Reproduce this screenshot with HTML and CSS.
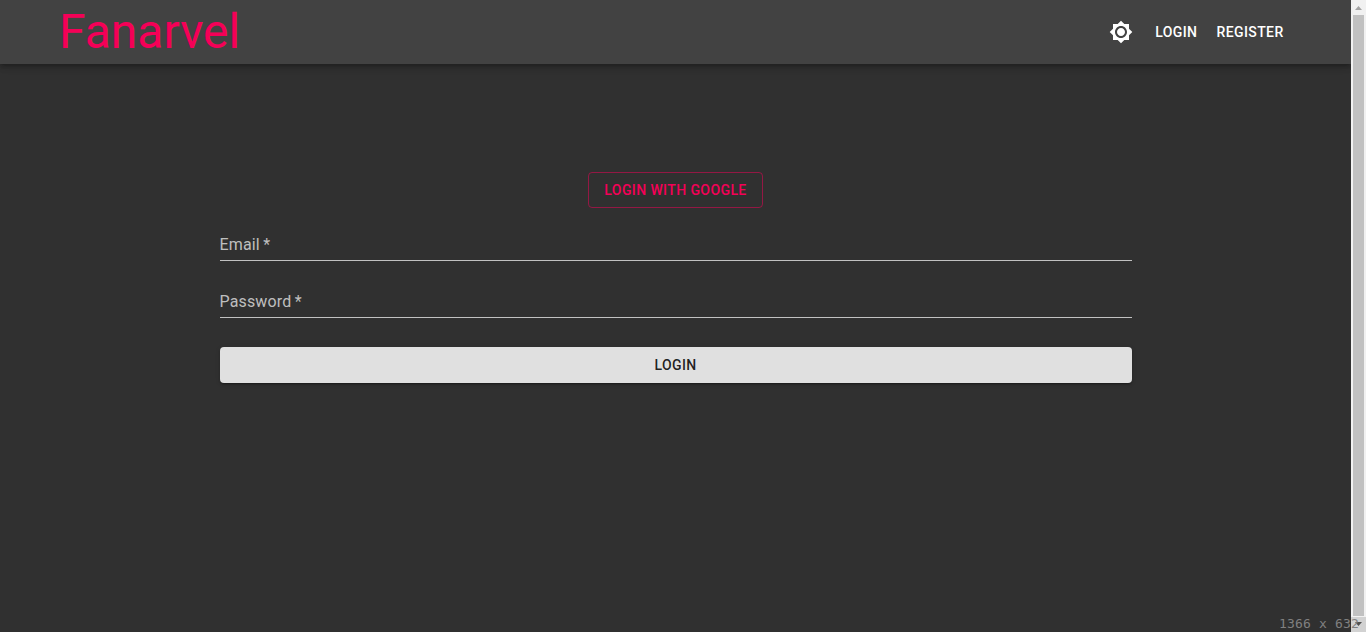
FILE: index.html
```html
<!DOCTYPE html>
<html lang="en">
<head>
<meta charset="utf-8">
<title>Fanarvel</title>
<link rel="stylesheet" href="styles.css">
</head>
<body>
<div class="page">
  <header class="appbar">
    <div class="brand">Fanarvel</div>
    <nav class="nav">
      <button class="icon-btn" aria-label="Toggle theme">
        <svg class="icon" viewBox="0 0 24 24"><path d="M20 8.69V4h-4.690L12 .69 8.690 4H4v4.690L.69 12 4 15.310V20h4.690L12 23.310 15.310 20H20v-4.690L23.310 12 20 8.690zM12 18c-3.310 0-6-2.690-6-6s2.690-6 6-6 6 2.690 6 6-2.690 6-6 6zm0-10c-2.210 0-4 1.790-4 4s1.790 4 4 4 4-1.790 4-4-1.790-4-4-4z"/></svg>
      </button>
      <a class="btn nav-link">Login</a>
      <a class="btn nav-link">Register</a>
    </nav>
  </header>
  <main class="main">
    <button class="btn google">Login with Google</button>
    <form class="form">
      <label class="field">Email<span class="required">*</span></label>
      <label class="field">Password<span class="required">*</span></label>
      <button type="button" class="btn submit">Login</button>
    </form>
  </main>
</div>
<div class="scrollbar">
  <div class="arrow"><svg class="up" viewBox="0 0 15 15"><path d="M4 10h7L7.500 6z"/></svg></div>
  <div class="thumb"></div>
  <div class="arrow down"><svg viewBox="0 0 15 15"><path d="M4 5h7L7.500 9z"/></svg></div>
</div>
<div class="size">1366 x 632</div>
</body>
</html>
```
FILE: styles.css
```css
* { box-sizing: border-box; }
body { margin: 0; height: 632px; display: flex; overflow: hidden; position: relative; background: #303030; color: #fff; font-family: Roboto, sans-serif; }
.page { flex: 1; }
.appbar { height: 64px; padding: 0 59.4px 0 59px; display: flex; align-items: center; justify-content: space-between; background: #424242; box-shadow: 0 2px 4px -1px rgba(0,0,0,.2), 0 4px 5px rgba(0,0,0,.14), 0 1px 10px rgba(0,0,0,.12); }
.brand { color: #f50057; font-size: 48px; line-height: 56px; }
.nav { display: flex; align-items: center; }
.icon-btn { width: 48px; height: 48px; padding: 12px; margin-right: -.5px; border: 0; background: none; }
.icon { display: block; width: 24px; height: 24px; fill: #fff; }
.btn { font: 500 14px/24.5px Roboto, sans-serif; letter-spacing: .4px; text-transform: uppercase; border: 0; border-radius: 4px; }
.nav-link { padding: 6px 8px; margin-left: 3px; }
.main { width: 912px; margin: 108px auto 0; display: flex; flex-direction: column; align-items: center; }
.google { height: 36px; padding: 5px 15px; background: none; color: #f50057; border: 1px solid rgba(245,0,87,.5); }
.form { width: 100%; display: flex; flex-direction: column; margin-top: 21px; }
.field { height: 32px; margin-bottom: 25px; padding-top: 6px; border-bottom: 1px solid rgba(255,255,255,.7); color: rgba(255,255,255,.7); font-size: 16px; line-height: 19px; letter-spacing: .15px; }
.required { margin-left: 3.3px; }
.submit { height: 36px; padding: 6px 16px; margin-top: 4px; background: #e0e0e0; color: rgba(0,0,0,.87); box-shadow: 0 3px 1px -2px rgba(0,0,0,.2), 0 2px 2px rgba(0,0,0,.14), 0 1px 5px rgba(0,0,0,.12); }
.scrollbar { width: 15px; display: flex; flex-direction: column; background: #f1f1f1; }
.arrow { height: 15px; }
.arrow svg { display: block; width: 15px; height: 15px; fill: #505050; }
.arrow .up { fill: #a3a3a3; }
.down { background: #d2d2d2; }
.thumb { flex: 1; margin: 0 2px 1px; background: #c1c1c1; }
.size { position: absolute; left: 1279px; top: 616px; white-space: pre; font: 13px/16px "DejaVu Sans Mono", monospace; letter-spacing: .17px; color: #808080; }
```
